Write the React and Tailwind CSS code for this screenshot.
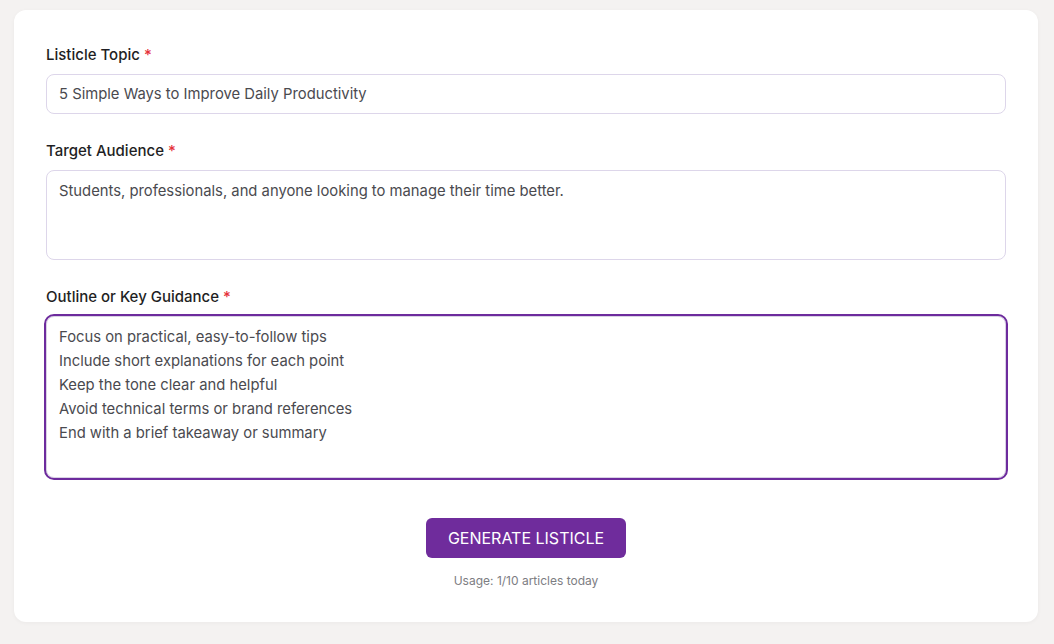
const outline = [
  "Focus on practical, easy-to-follow tips",
  "Include short explanations for each point",
  "Keep the tone clear and helpful",
  "Avoid technical terms or brand references",
  "End with a brief takeaway or summary",
].join("\n");

function Label({ children }) {
  return (
    <label className="mb-[9px] block text-[15px] font-medium leading-5 text-[#1f1f24]">
      {children} <span className="text-[#e5303a]">*</span>
    </label>
  );
}

export default function App() {
  return (
    <div
      className="min-h-screen bg-[#f4f2f1] pl-[14px] pr-4 pt-[10px] pb-6"
      style={{ fontFamily: "Inter, 'Noto Sans', sans-serif" }}
    >
      <div className="rounded-xl bg-white px-8 pt-[35px] pb-[33px] shadow-[0_1px_4px_rgba(0,0,0,0.04)]">
        <div>
          <Label>Listicle Topic</Label>
          <input
            type="text"
            readOnly
            value="5 Simple Ways to Improve Daily Productivity"
            className="block h-10 w-full rounded-lg border border-[#ddd6ea] bg-white px-3 text-[14.8px] text-[#4a4a4f] outline-none"
          />
        </div>

        <div className="mt-[27px]">
          <Label>Target Audience</Label>
          <textarea
            readOnly
            value="Students, professionals, and anyone looking to manage their time better."
            className="block h-[90px] w-full resize-none rounded-lg border border-[#ddd6ea] bg-white px-3 py-[8px] text-[14.8px] leading-6 text-[#4a4a4f] outline-none"
          />
        </div>

        <div className="mt-[27px]">
          <Label>Outline or Key Guidance</Label>
          <textarea
            readOnly
            value={outline}
            className="block h-[162px] w-full resize-none rounded-lg border border-[#d9d2e4] bg-white px-3 py-[8px] text-[14.8px] leading-6 text-[#4a4a4f] outline-2 outline-[#6d2b9d]"
          />
        </div>

        <div className="mt-[40px] flex flex-col items-center">
          <button
            type="button"
            className="h-10 w-[200px] rounded-md bg-[#6f2c9c] text-[16px] font-normal uppercase text-white"
          >
            Generate Listicle
          </button>
          <p className="mt-[15px] text-xs leading-4 text-[#7d7d82]">Usage: 1/10 articles today</p>
        </div>
      </div>
    </div>
  );
}
